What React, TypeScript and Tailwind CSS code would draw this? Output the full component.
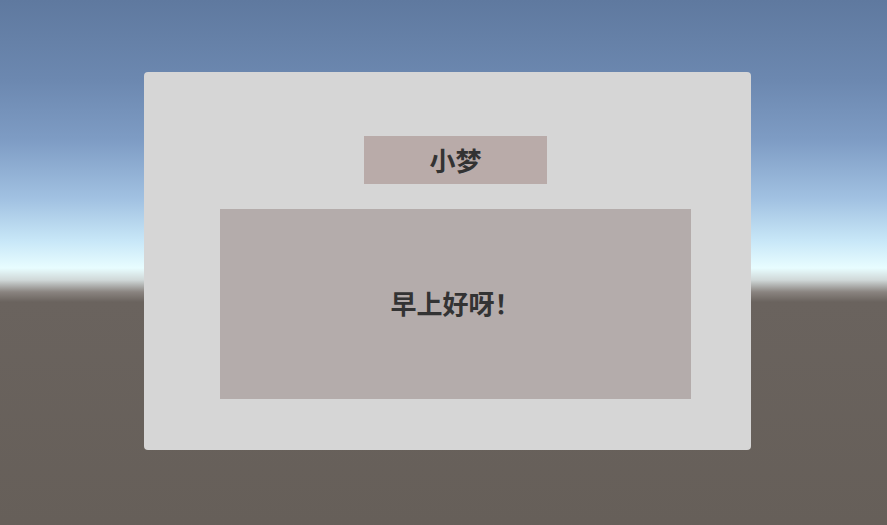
import React from 'react';

export default function App() {
  return (
    <div
      className="w-full h-[525px] overflow-hidden pt-[72px] pl-[144px] bg-[linear-gradient(to_bottom,#5f799f_0px,#6c88b0_80px,#7e9cc4_140px,#a2c2e2_200px,#c9e8f8_242px,#e8fdff_268px,#d0d8d8_280px,#8a8480_292px,#6a635e_302px,#665f59_525px)]"
      style={{ fontFamily: '"Noto Sans CJK SC", "Noto Sans", sans-serif' }}
    >
      {/* Dialog panel */}
      <div className="w-[607px] h-[378px] rounded-[4px] bg-[#d6d6d6] pl-[76px] pt-[64px] flex flex-col">
        {/* Speaker name */}
        <div className="ml-[144px] w-[183px] h-[48px] bg-[#b9aba9] flex items-center justify-center">
          <span className="text-[26px] font-bold text-[#333333] leading-none">小梦</span>
        </div>

        {/* Message box */}
        <div className="mt-[25px] w-[471px] h-[190px] bg-[#b4acab] flex items-center justify-center">
          <span className="text-[26px] font-bold text-[#333333] leading-none -mt-[2px]">早上好呀！</span>
        </div>
      </div>
    </div>
  );
}
